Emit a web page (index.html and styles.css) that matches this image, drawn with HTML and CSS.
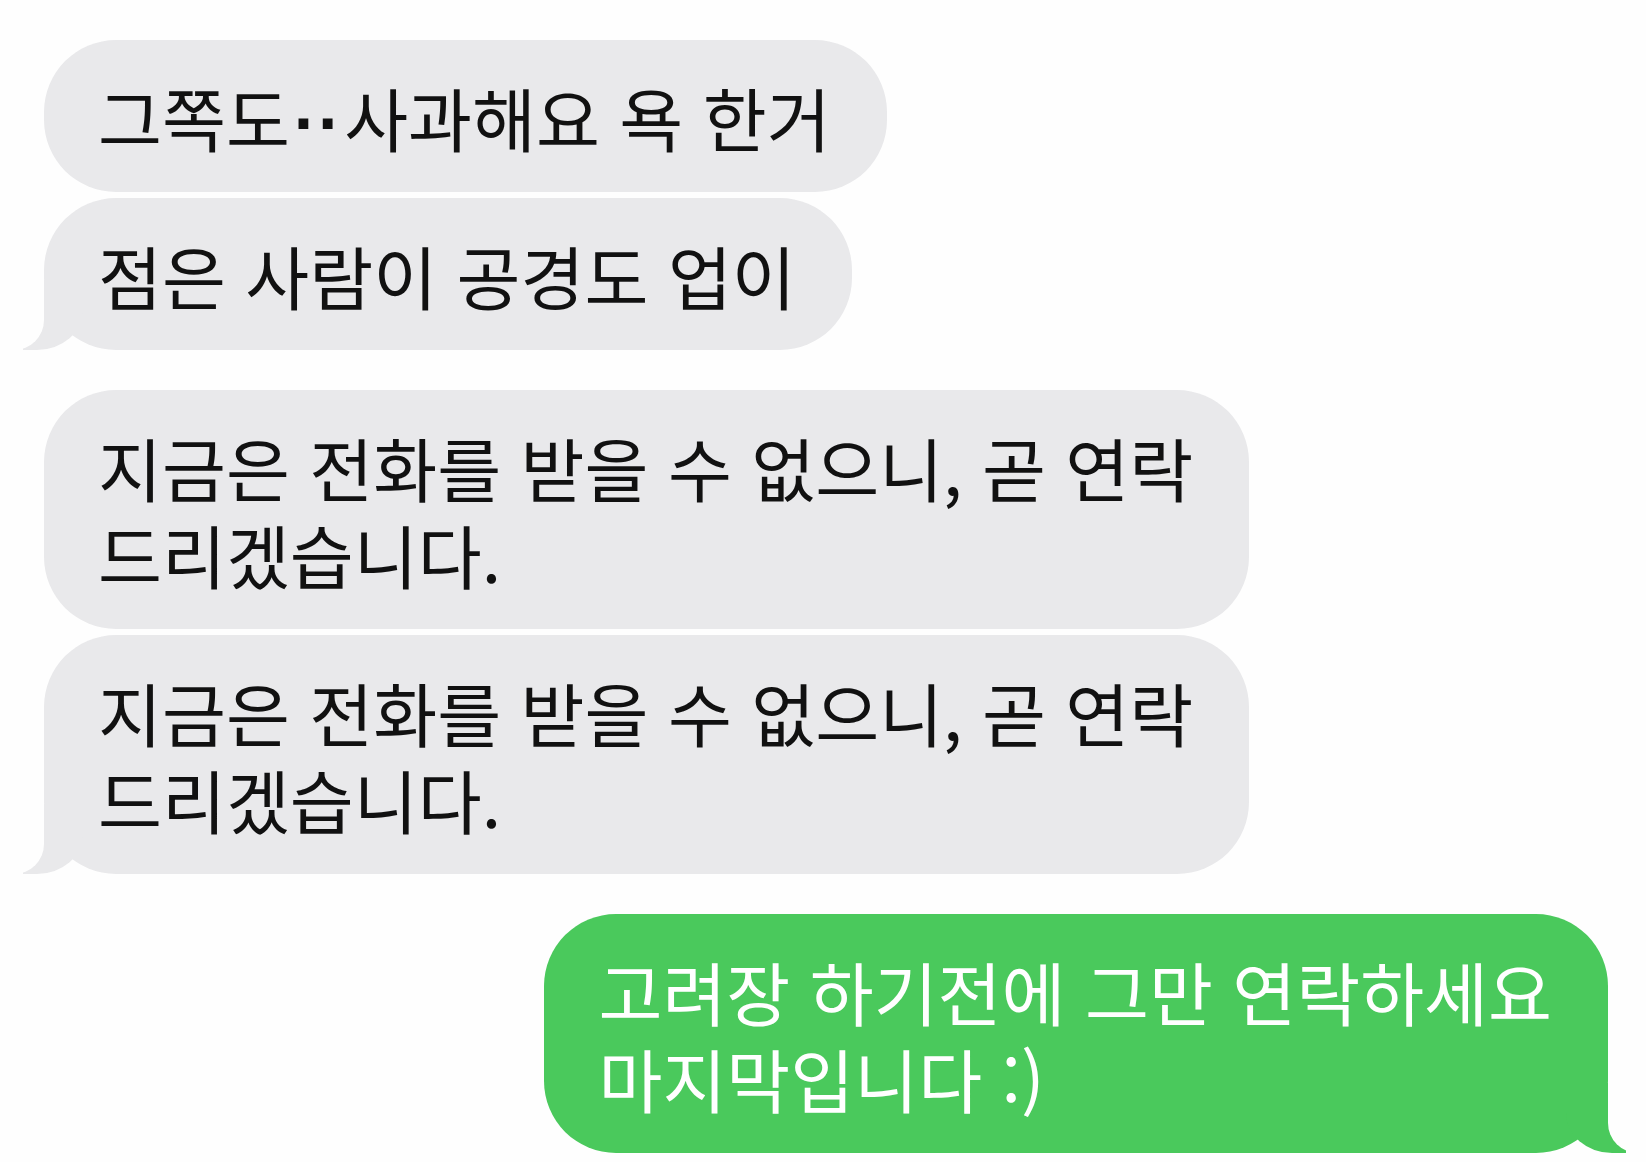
FILE: index.html
```html
<!DOCTYPE html>
<html lang="ko">
<head>
    <meta charset="UTF-8">
    <meta name="viewport" content="width=device-width, initial-scale=1.0">
    <title>Messages</title>
    <link rel="stylesheet" href="styles.css">
</head>
<body>
    <div id="chat">
        <div class="group">
            <div class="bubble them">그쪽도<span class="dots">··</span>사과해요 욕 한거</div>
            <div class="bubble them tail">점은 사람이 공경도 업이</div>
        </div>
        <div class="group">
            <div class="bubble them">지금은 전화를 받을 수 없으니, 곧 연락<br>드리겠습니다.</div>
            <div class="bubble them tail">지금은 전화를 받을 수 없으니, 곧 연락<br>드리겠습니다.</div>
        </div>
        <div class="group mine">
            <div class="bubble me tail">고려장 하기전에 그만 연락하세요<br>마지막입니다 :)</div>
        </div>
    </div>
</body>
</html>
```

FILE: styles.css
```css
body{
    margin: 0;
    padding: 0;
    background: #fefefe;
    font-family: "Noto Sans CJK KR", "Noto Sans", sans-serif;
}
#chat{
    display: flex;
    flex-direction: column;
    gap: 40px;
    padding: 40px 38px 0 44px;
}
.group{
    display: flex;
    flex-direction: column;
    align-items: flex-start;
    gap: 6px;
}
.group.mine{
    align-items: flex-end;
}
.bubble{
    position: relative;
    font-size: 69.5px;
    line-height: 87px;
    padding: 33px 56px 32px 54px;
    border-radius: 72px;
    white-space: nowrap;
}
.dots{
    font-family: "Liberation Sans", sans-serif;
    font-weight: bold;
    line-height: 0;
    letter-spacing: 1px;
    padding: 0 2px 0 4px;
}
.them{
    background: #e9e9eb;
    color: #111;
}
.me{
    background: #4ac95c;
    color: #fff;
}
.them.tail::before,
.them.tail::after,
.me.tail::before,
.me.tail::after{
    content: "";
    position: absolute;
    bottom: 0;
    height: 70px;
}
.them.tail::before{
    left: -21px;
    width: 60px;
    background: #e9e9eb;
    border-bottom-right-radius: 46px 40px;
}
.them.tail::after{
    left: -78px;
    width: 78px;
    background: #fefefe;
    border-bottom-right-radius: 30px;
}
.me.tail::before{
    right: -18px;
    width: 60px;
    background: #4ac95c;
    border-bottom-left-radius: 46px 40px;
}
.me.tail::after{
    right: -78px;
    width: 78px;
    background: #fefefe;
    border-bottom-left-radius: 30px;
}
```
